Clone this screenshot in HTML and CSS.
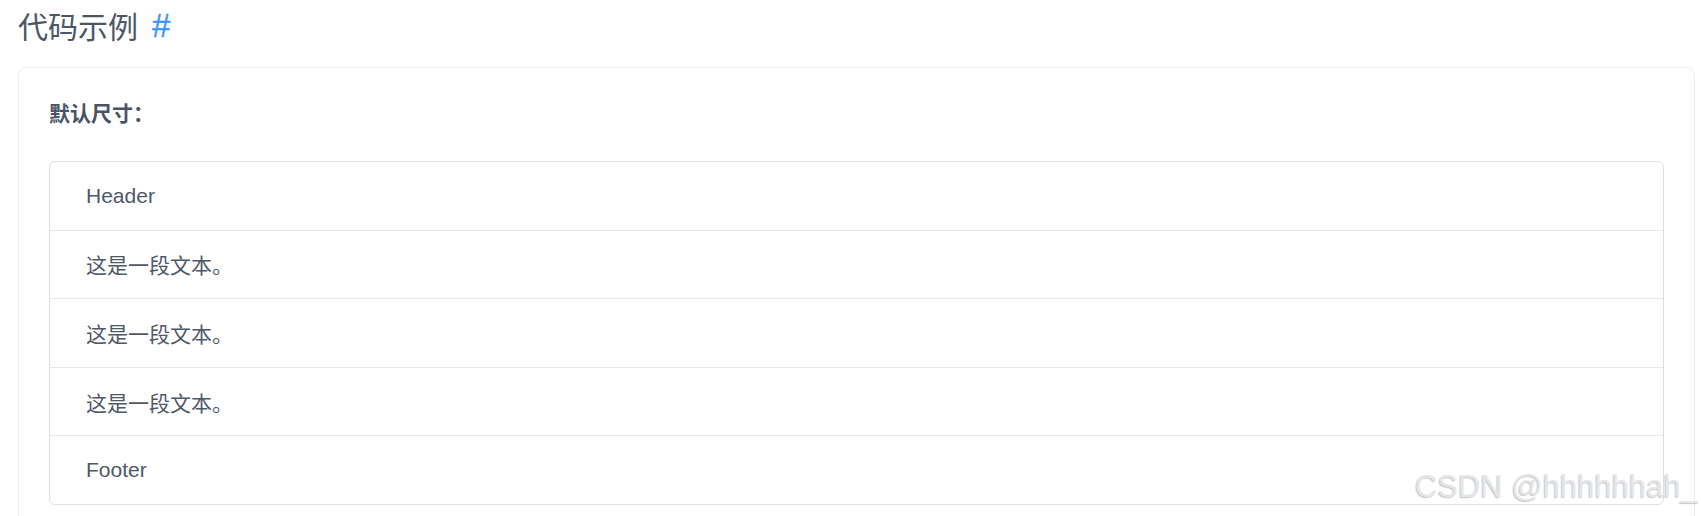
FILE: index.html
```html
<!DOCTYPE html>
<html lang="zh-CN">
<head>
<meta charset="utf-8">
<title>代码示例</title>
<link rel="stylesheet" href="styles.css">
</head>
<body>
<div class="page">
  <h3 class="title"><span class="title-text">代码示例</span><a class="anchor" href="#">#</a></h3>
  <div class="demo-card">
    <p class="label">默认尺寸：</p>
    <ul class="list">
      <li class="row">Header</li>
      <li class="row">这是一段文本。</li>
      <li class="row">这是一段文本。</li>
      <li class="row">这是一段文本。</li>
      <li class="row">Footer</li>
    </ul>
  </div>
</div>
<div class="watermark">CSDN @hhhhhhah_</div>
</body>
</html>
```

FILE: styles.css
```css
html, body {
  margin: 0;
  padding: 0;
  height: 100%;
  overflow: hidden;
  background: #ffffff;
}

body {
  font-family: "Liberation Sans", "Noto Sans CJK SC", sans-serif;
  color: #48576a;
}

.page {
  padding: 0 6px 0 18px;
}

.title {
  margin: 10px 0 0 0;
  height: 30px;
  display: flex;
  align-items: center;
  gap: 14px;
  font-weight: 400;
}

.title-text {
  font-size: 30px;
  line-height: 30px;
  color: #4c5668;
  font-family: "Noto Sans CJK SC", "Liberation Sans", sans-serif;
}

.anchor {
  color: #3f95f5;
  text-decoration: none;
  font-family: "Liberation Sans", sans-serif;
  font-size: 33px;
  line-height: 30px;
  padding-top: 2px;
  -webkit-text-stroke: 0.4px #3f95f5;
}

.demo-card {
  margin-top: 27px;
  border: 1px solid #ebeef5;
  border-radius: 8px;
  padding: 34px 30px 30px 30px;
}

.label {
  margin: 0 0 39px 0;
  font-size: 21px;
  line-height: 20px;
  font-weight: 700;
  color: #4a5365;
  font-family: "Noto Sans CJK SC", sans-serif;
}

.list {
  list-style: none;
  margin: 0;
  padding: 0;
  border: 1px solid #dcdfe6;
  border-radius: 6px;
}

.row {
  height: 67.6px;
  display: flex;
  align-items: center;
  padding: 0 36px;
  font-size: 21px;
  color: #4e586a;
  border-top: 1px solid #e6e8ee;
}

.row:first-child {
  border-top: none;
}

.watermark {
  position: absolute;
  right: 3px;
  bottom: 14px;
  font-family: "Liberation Sans", sans-serif;
  font-size: 31px;
  line-height: 31px;
  color: #e6e6e6;
  text-shadow: -1px 1px 1px rgba(0, 0, 0, 0.22);
  white-space: nowrap;
}
```
